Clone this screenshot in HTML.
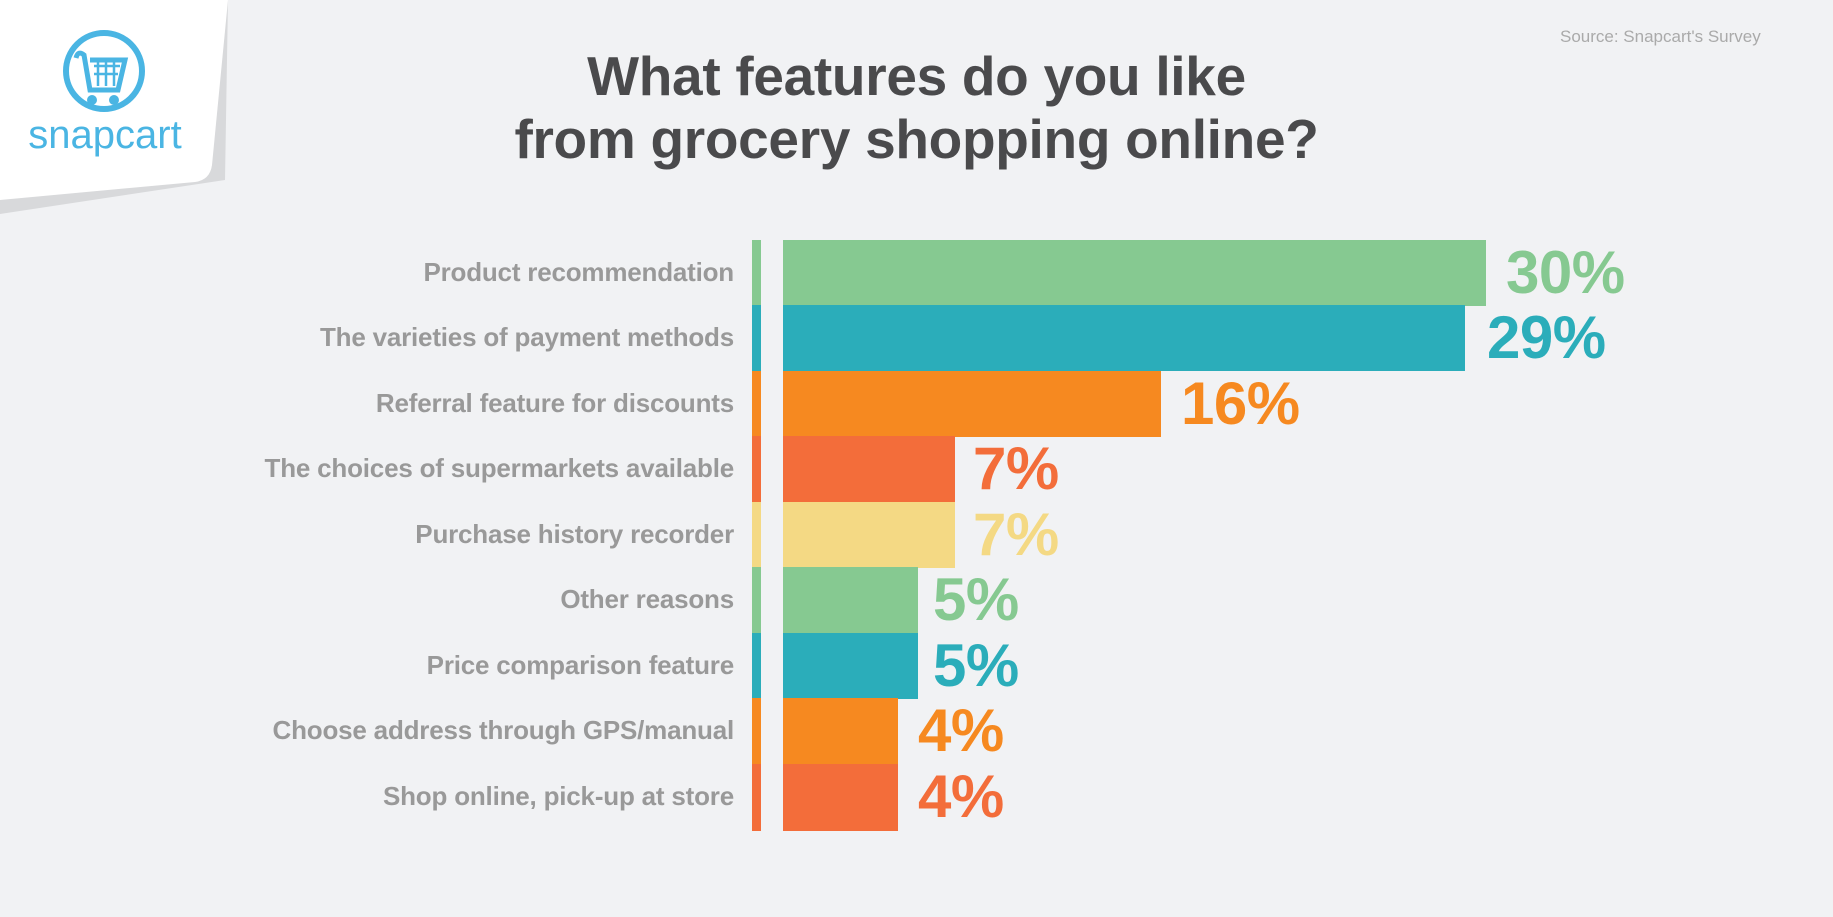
<!DOCTYPE html>
<html><head><style>
body{margin:0;width:1833px;height:917px;background:#f1f2f4;position:relative;overflow:hidden;font-family:"Liberation Sans",sans-serif}
.t{position:absolute;left:0;width:1833px;text-align:center;font-weight:bold;color:#4a4a4c;font-size:55px;letter-spacing:-0.3px}
.src{position:absolute;left:1560px;top:27px;font-size:17px;color:#aaa}
.lab{position:absolute;right:1099px;font-size:26px;font-weight:bold;color:#999;height:65px;line-height:65px;white-space:nowrap;letter-spacing:-0.2px}
.sb{position:absolute;left:752px;width:9px;height:66px}
.b{position:absolute;left:783px;height:66px}
.p{position:absolute;font-size:60px;font-weight:bold;height:65px;line-height:65px;letter-spacing:-0.5px}
</style></head><body>
<svg style="position:absolute;left:0;top:0" width="240" height="220">
<polygon points="0,214 225,180 228,0 0,0" fill="#d8d9db"/>
<path d="M0,0 H228 L212,165 Q210,180 195,182 L0,200 Z" fill="#fff"/>
<circle cx="104" cy="71" r="38" fill="none" stroke="#4ab5e3" stroke-width="6"/>
<path d="M76,58 Q78,50 84,55 L90,90 H118 L125,60 H90" fill="none" stroke="#4ab5e3" stroke-width="5"/>
<path d="M94,66 H120 M94,74 H118 M98,60 V86 M106,60 V86 M114,60 V86" stroke="#4ab5e3" stroke-width="2.5"/>
<circle cx="92" cy="100" r="5" fill="#4ab5e3"/><circle cx="114" cy="100" r="5" fill="#4ab5e3"/>
<text x="105" y="148" text-anchor="middle" font-family="Liberation Sans" font-size="40" fill="#4ab5e3">snapcart</text>
</svg>
<div class="src">Source: Snapcart's Survey</div>
<div class="t" style="top:44px">What features do you like</div>
<div class="t" style="top:107px">from grocery shopping online?</div>

<div class="lab" style="top:240px">Product recommendation</div>
<div class="lab" style="top:305px">The varieties of payment methods</div>
<div class="lab" style="top:371px">Referral feature for discounts</div>
<div class="lab" style="top:436px">The choices of supermarkets available</div>
<div class="lab" style="top:502px">Purchase history recorder</div>
<div class="lab" style="top:567px">Other reasons</div>
<div class="lab" style="top:633px">Price comparison feature</div>
<div class="lab" style="top:698px">Choose address through GPS/manual</div>
<div class="lab" style="top:764px">Shop online, pick-up at store</div>

<div class="sb" style="top:240px;background:#86c991"></div><div class="b" style="top:240px;width:703px;background:#86c991"></div><div class="p" style="top:240px;left:1506px;color:#86c991">30%</div>
<div class="sb" style="top:305px;background:#2badba"></div><div class="b" style="top:305px;width:682px;background:#2badba"></div><div class="p" style="top:305px;left:1487px;color:#2badba">29%</div>
<div class="sb" style="top:371px;background:#f68920"></div><div class="b" style="top:371px;width:378px;background:#f68920"></div><div class="p" style="top:371px;left:1181px;color:#f68920">16%</div>
<div class="sb" style="top:436px;background:#f36d3a"></div><div class="b" style="top:436px;width:172px;background:#f36d3a"></div><div class="p" style="top:436px;left:973px;color:#f36d3a">7%</div>
<div class="sb" style="top:502px;background:#f4d984"></div><div class="b" style="top:502px;width:172px;background:#f4d984"></div><div class="p" style="top:502px;left:973px;color:#f4d984">7%</div>
<div class="sb" style="top:567px;background:#86c991"></div><div class="b" style="top:567px;width:135px;background:#86c991"></div><div class="p" style="top:567px;left:933px;color:#86c991">5%</div>
<div class="sb" style="top:633px;background:#2badba"></div><div class="b" style="top:633px;width:135px;background:#2badba"></div><div class="p" style="top:633px;left:933px;color:#2badba">5%</div>
<div class="sb" style="top:698px;background:#f68920"></div><div class="b" style="top:698px;width:115px;background:#f68920"></div><div class="p" style="top:698px;left:918px;color:#f68920">4%</div>
<div class="sb" style="top:764px;background:#f36d3a;height:67px"></div><div class="b" style="top:764px;width:115px;height:67px;background:#f36d3a"></div><div class="p" style="top:764px;left:918px;color:#f36d3a">4%</div>
</body></html>
